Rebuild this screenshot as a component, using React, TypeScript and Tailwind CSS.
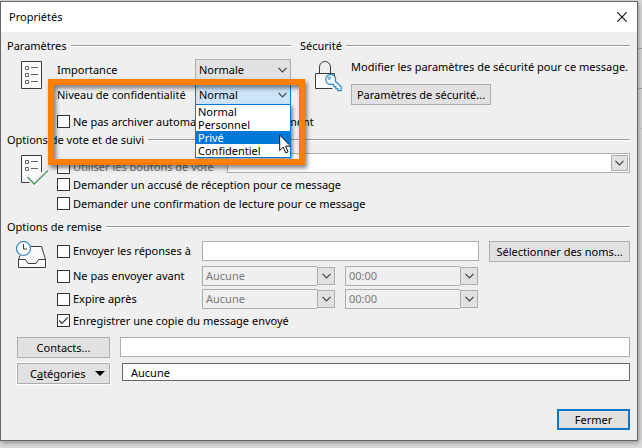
import { useState } from "react";
import type { ReactNode } from "react";

const levels = ["Normal", "Personnel", "Privé", "Confidentiel"];

const buttonClass =
  "h-[21px] shrink-0 border border-[#adadad] bg-[#e1e1e1] leading-4 whitespace-nowrap text-black";

const Chevron = ({ className = "" }: { className?: string }) => (
  <svg
    viewBox="0 0 9 6"
    className={`pointer-events-none h-[6px] w-[9px] ${className}`}
    fill="none"
    stroke="#444"
    strokeWidth="1.2"
  >
    <path d="M.5 .8 4.5 4.8 8.5 .8" />
  </svg>
);

const SectionTitle = ({ children }: { children: ReactNode }) => (
  <div className="flex h-4 items-center gap-1">
    <h2 className="leading-4 whitespace-nowrap">{children}</h2>
    <div className="h-0.5 flex-1 border-t border-[#9a9a9a] bg-white" />
  </div>
);

type CheckProps = {
  label: string;
  checked?: boolean;
  disabled?: boolean;
  className?: string;
};

const Check = ({ label, checked, disabled, className = "" }: CheckProps) => (
  <label
    className={`flex shrink-0 items-center gap-[3px] whitespace-nowrap ${
      disabled ? "text-[#6d6d6d]" : ""
    } ${className}`}
  >
    <span className="relative size-[13px] shrink-0">
      <input
        type="checkbox"
        defaultChecked={checked}
        disabled={disabled}
        className="peer block size-[13px] appearance-none border border-[#333] bg-white"
      />
      <svg
        viewBox="0 0 13 13"
        className="pointer-events-none absolute inset-0 hidden size-[13px] peer-checked:block"
        fill="none"
        stroke="#333"
        strokeWidth="1.3"
      >
        <path d="M2.3 6.5 5 9.4 10.8 3.4" />
      </svg>
    </span>
    {label}
  </label>
);

const DisabledCombo = ({ label, value }: { label: string; value: string }) => (
  <div className="relative h-5 w-[133px]">
    <select
      aria-label={label}
      disabled
      className="block h-5 w-full appearance-none border border-[#adadad] bg-[#efefef] pl-[3px] leading-4 text-[#7a7a7a] opacity-100"
    >
      <option>{value}</option>
    </select>
    <span className="pointer-events-none absolute inset-y-0 right-0 flex w-[18px] border-y border-[#efefef]">
      <span className="flex flex-1 items-center justify-center border border-[#adadad] bg-[#e1e1e1]">
        <Chevron />
      </span>
    </span>
  </div>
);

const ListIcon = () => (
  <svg viewBox="0 0 21 28" className="h-7 w-[21px]" fill="none" stroke="#3b3b3b">
    <path d="M.5 .5h20v27H.5z" fill="#fafafa" />
    <path d="M4.5 5.5h3v3h-3zM4.5 12.5h3v3h-3zM4.5 19.5h3v3h-3z" stroke="#666" />
    <path d="M10 6.5h7M10 13.5h7M10 20.5h7" stroke="#666" />
  </svg>
);

const VoteIcon = () => (
  <svg viewBox="0 0 28 31" className="h-[31px] w-7" fill="none" stroke="#3b3b3b">
    <path d="M20.5 17V.5H.5v27h9L6.5 22 8 20.5l5 5.5z" fill="#fafafa" stroke="none" />
    <path d="M20.5 17V.5H.5v27h8" />
    <path d="M4.5 5.5h3v3h-3zM4.5 12.5h3v3h-3z" stroke="#666" />
    <path d="M10 6.5h7M10 13.5h7" stroke="#666" />
    <path d="M6.5 22 13.2 29 27 15.5" stroke="#4b9a63" strokeWidth="1.3" />
  </svg>
);

const LockIcon = () => (
  <svg viewBox="0 0 27 31" className="h-[31px] w-[27px]" fill="none">
    <path d="M.5 12.5h19v15H.5z" fill="#fafafa" />
    <path d="M19.5 15v-2.5H.5v15h17" stroke="#3b3b3b" />
    <path d="M4.5 12.5V6a5.5 5.5 0 0 1 11 0v6.5" stroke="#3b3b3b" />
    <path
      d="M20.3 20.2 26.2 25.8V29.6H22.8V27.6H20.8V25.6H18.8V23.8L17 23.2A5 5 0 1 1 20.3 20.2Z"
      fill="#f4f9fd"
      stroke="#3089c9"
      strokeWidth="1.2"
    />
    <circle cx="14.2" cy="17.2" r="1.2" stroke="#3089c9" />
  </svg>
);

const DeliveryIcon = () => (
  <svg viewBox="0 0 31 28" className="h-7 w-[31px]" fill="none" stroke="#3b3b3b">
    <path d="M6 5.5h19.5l4 13v8h-27v-8z" fill="#fafafa" stroke="none" />
    <path d="M15 5.5h10.5l4 13M4 14.5 2.5 18.5" />
    <path d="M2.5 18.5h7l2.500 4h8l2.500-4h7v8h-27z" />
    <circle cx="7.5" cy="7.5" r="7" fill="#fafafa" stroke="#3089c9" strokeWidth="1.2" />
    <path d="M7.5 3v5h3.5" />
  </svg>
);

const Cursor = () => (
  <svg
    viewBox="0 0 13 20"
    className="pointer-events-none absolute top-[30px] left-[84px] h-5 w-[13px]"
    fill="#fff"
    stroke="#111"
  >
    <path d="M.7 1v15.5l3.5-3.4 2.5 5.7 2.4-1-2.5-5.6h5z" />
  </svg>
);

export default function App() {
  const [level, setLevel] = useState("Normal");
  const [active, setActive] = useState("Privé");

  return (
    <div className="flex min-h-screen items-start bg-[#dcdcdc] pt-px font-['Noto_Sans','Open_Sans',sans-serif] text-[11px] leading-4 text-black">
      <main className="min-w-0 flex-1 border border-[#666] bg-[#efefef] shadow-[1px_2px_5px_rgba(0,0,0,0.35)]">
        <header className="flex h-[30px] items-center justify-between bg-white pr-2.5 pl-2">
          <h1>Propriétés</h1>
          <button type="button" aria-label="Fermer la fenêtre">
            <svg viewBox="0 0 10 10" className="size-2.5" stroke="#111" strokeWidth="1.1">
              <path d="M.3 .3 9.7 9.7M9.7 .3 .3 9.7" />
            </svg>
          </button>
        </header>

        <div className="pt-1.5 pr-[7px] pb-2.5 pl-1.5">
          <div className="grid grid-cols-[284px_minmax(0,1fr)] gap-x-[9px]">
            <section className="relative">
              <SectionTitle>Paramètres</SectionTitle>
              <div className="flex pt-[5px]">
                <div className="w-[50px] shrink-0 pt-0.5 pl-3.5">
                  <ListIcon />
                </div>
                <div className="min-w-0 flex-1">
                  <div className="flex h-[21px] items-center justify-between">
                    <label htmlFor="importance">Importance</label>
                    <div className="relative">
                      <select
                        id="importance"
                        className="block h-[21px] w-24 appearance-none border border-[#adadad] bg-[#e1e1e1] pl-[3px] leading-4"
                      >
                        <option>Normale</option>
                      </select>
                      <Chevron className="absolute top-2 right-1" />
                    </div>
                  </div>

                  <div className="mt-1 flex h-[21px] items-center justify-between">
                    <label htmlFor="level" className="whitespace-nowrap">
                      Niveau de confidentialité
                    </label>
                    <div className="relative z-10">
                      <select
                        id="level"
                        value={level}
                        onChange={(e) => setLevel(e.target.value)}
                        className="block h-[21px] w-24 appearance-none border border-[#0078d7] bg-[#cce4f7] pl-[3px] leading-4"
                      >
                        {levels.map((item) => (
                          <option key={item}>{item}</option>
                        ))}
                      </select>
                      <Chevron className="absolute top-2 right-1" />
                      <div className="absolute top-5 left-0 w-24">
                        <ul
                          role="listbox"
                          aria-label="Niveau de confidentialité"
                          className="border border-[#0078d7] bg-white shadow-[2px_2px_3px_rgba(0,0,0,0.4)]"
                        >
                          {levels.map((item) => (
                            <li
                              key={item}
                              role="option"
                              aria-selected={item === active}
                              onMouseEnter={() => setActive(item)}
                              onClick={() => setLevel(item)}
                              className={`h-[13px] pl-0.5 leading-[13px] ${
                                item === active ? "bg-[#0078d7] text-white" : ""
                              }`}
                            >
                              {item}
                            </li>
                          ))}
                        </ul>
                        <Cursor />
                      </div>
                    </div>
                  </div>

                  <Check
                    label="Ne pas archiver automatiquement cet élément"
                    className="mt-1.5 h-[21px]"
                  />
                </div>
              </div>
              {/* Highlight frame */}
              <div className="pointer-events-none absolute top-[41px] -right-3.5 left-[41px] z-20 h-[86px] border-6 border-[#ff8000] drop-shadow-[2px_3px_2px_rgba(0,0,0,0.5)]" />
            </section>

            <section>
              <SectionTitle>Sécurité</SectionTitle>
              <div className="flex pt-[5px]">
                <div className="w-[51px] shrink-0 pt-0.5 pl-[15px]">
                  <LockIcon />
                </div>
                <div>
                  <p className="whitespace-nowrap">
                    Modifier les paramètres de sécurité pour ce message.
                  </p>
                  <button type="button" className={`${buttonClass} mt-[9px] w-[140px]`}>
                    Paramètres de sécurité...
                  </button>
                </div>
              </div>
            </section>
          </div>

          <section>
            <SectionTitle>Options de vote et de suivi</SectionTitle>
            <div className="flex pt-[5px]">
              <div className="w-[50px] shrink-0 pt-0.5 pl-3.5">
                <VoteIcon />
              </div>
              <div className="flex-1">
                <div className="flex h-5 items-center">
                  <Check label="Utiliser les boutons de vote" disabled className="w-[170px] pt-2" />
                  <div className="relative h-5 flex-1">
                    <select
                      aria-label="Boutons de vote"
                      className="block h-5 w-full appearance-none border border-[#adadad] bg-white"
                    />
                    <span className="pointer-events-none absolute inset-y-0.5 right-0.5 flex w-[17px] items-center justify-center border border-[#adadad] bg-[#e1e1e1]">
                      <Chevron />
                    </span>
                  </div>
                </div>
                <Check
                  label="Demander un accusé de réception pour ce message"
                  className="mt-0.5 h-[19px]"
                />
                <Check
                  label="Demander une confirmation de lecture pour ce message"
                  className="h-[19px]"
                />
              </div>
            </div>
          </section>

          <section className="mt-1.5">
            <SectionTitle>Options de remise</SectionTitle>
            <div className="flex pt-1.5">
              <div className="w-[50px] shrink-0 pl-[9px]">
                <DeliveryIcon />
              </div>
              <div className="flex-1">
                <div className="flex h-5 items-start">
                  <Check label="Envoyer les réponses à" className="h-5 w-[145px]" />
                  <input
                    type="text"
                    aria-label="Adresse de réponse"
                    className="h-5 min-w-0 flex-1 border border-[#adadad] bg-white px-1"
                  />
                  <button type="button" className={`${buttonClass} ml-2.5 w-[141px]`}>
                    Sélectionner des noms...
                  </button>
                </div>
                <div className="mt-[5px] flex h-5 items-center">
                  <Check label="Ne pas envoyer avant" className="w-[145px]" />
                  <div className="flex gap-2.5">
                    <DisabledCombo label="Date d'envoi" value="Aucune" />
                    <DisabledCombo label="Heure d'envoi" value="00:00" />
                  </div>
                </div>
                <div className="mt-[3px] flex h-5 items-center">
                  <Check label="Expire après" className="w-[145px]" />
                  <div className="flex gap-2.5">
                    <DisabledCombo label="Date d'expiration" value="Aucune" />
                    <DisabledCombo label="Heure d'expiration" value="00:00" />
                  </div>
                </div>
                <Check
                  label="Enregistrer une copie du message envoyé"
                  checked
                  className="mt-0.5 h-[19px]"
                />
              </div>
            </div>
          </section>

          <div className="mt-[7px] flex items-start gap-2.5 pl-2.5">
            <button type="button" className={`${buttonClass} w-[93px]`}>
              Contacts...
            </button>
            <input
              type="text"
              aria-label="Contacts"
              className="h-5 min-w-0 flex-1 border border-[#adadad] bg-white px-1"
            />
          </div>
          <div className="mt-[5px] flex items-start gap-3 pl-2.5">
            <button
              type="button"
              className={`${buttonClass} flex w-[93px] items-center justify-between pr-1 pl-3 outline outline-white`}
            >
              <span>
                C<u>a</u>tégories
              </span>
              <svg viewBox="0 0 10 5" className="h-[5px] w-2.5" fill="#000">
                <path d="M0 0h10L5 5z" />
              </svg>
            </button>
            <input
              type="text"
              aria-label="Catégories"
              defaultValue="Aucune"
              className="h-[18px] min-w-0 flex-1 border border-[#666] bg-white px-2 leading-4"
            />
          </div>

          <div className="mt-[25px] flex justify-end">
            <button
              type="button"
              className="h-[21px] w-[73px] border-2 border-[#0f75c9] bg-[#e1e1e1] leading-4"
            >
              Fermer
            </button>
          </div>
        </div>
      </main>
      {/* Edge of the window behind the dialog */}
      <div className="w-1 shrink-0">
        <div className="h-12 border-b border-[#999]" />
        <div className="h-10 border-b border-[#999]" />
        <div className="h-10 border-b border-[#bbb]" />
      </div>
    </div>
  );
}
